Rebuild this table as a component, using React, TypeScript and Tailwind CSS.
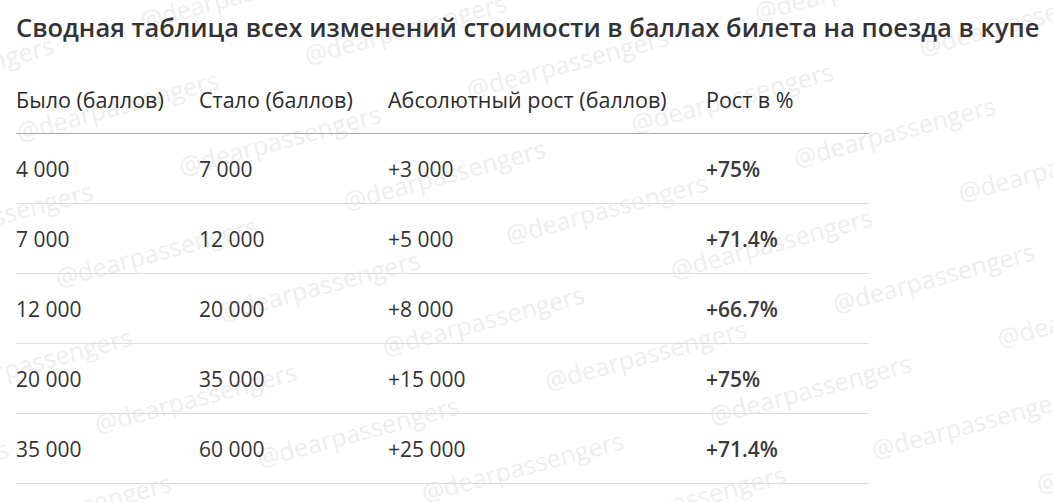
const rows = [
  ["4 000", "7 000", "+3 000", "+75%"],
  ["7 000", "12 000", "+5 000", "+71.4%"],
  ["12 000", "20 000", "+8 000", "+66.7%"],
  ["20 000", "35 000", "+15 000", "+75%"],
  ["35 000", "60 000", "+25 000", "+71.4%"],
];

const headers = ["Было (баллов)", "Стало (баллов)", "Абсолютный рост (баллов)", "Рост в %"];

const cols = "grid grid-cols-[183px_189px_318px_163px]";

function Watermark() {
  return (
    <div className="pointer-events-none absolute inset-0 overflow-hidden">
      <div className="absolute -left-[300px] -top-[400px] flex w-[1800px] rotate-[-15deg] flex-col gap-[38px]">
        {Array.from({ length: 26 }).map((_, i) => (
          <div
            key={i}
            className={`flex gap-[90px] whitespace-nowrap text-[25px] text-[#eeeeee] ${i % 2 ? "pl-[150px]" : ""}`}
          >
            {Array.from({ length: 8 }).map((_, j) => (
              <span key={j}>@dearpassengers</span>
            ))}
          </div>
        ))}
      </div>
    </div>
  );
}

export default function App() {
  return (
    <div className="relative h-[502px] w-[1053px] overflow-hidden bg-white font-['Open_Sans',sans-serif] text-[#333]">
      <Watermark />
      <div className="relative px-4 pt-[9px]">
        <h2 className="whitespace-nowrap text-[25.5px] font-semibold leading-[36px] text-[#333]">
          Сводная таблица всех изменений стоимости в баллах билета на поезда в купе
        </h2>
        <div className="mt-[20px] w-[853px]">
          <div className={`${cols} h-[69px] items-center border-b border-[#aaa] pt-[2px] text-[21.5px] text-[#2b2b2b]`}>
            {headers.map((h) => (
              <div key={h} className="whitespace-nowrap">{h}</div>
            ))}
          </div>
          {rows.map((r, i) => (
            <div key={i} className={`${cols} h-[70px] items-center border-b border-[#ddd] pt-[2px] text-[21px]`}>
              <div>{r[0]}</div>
              <div>{r[1]}</div>
              <div>{r[2]}</div>
              <div className="font-semibold text-[#3a3a3a]">{r[3]}</div>
            </div>
          ))}
        </div>
      </div>
    </div>
  );
}
